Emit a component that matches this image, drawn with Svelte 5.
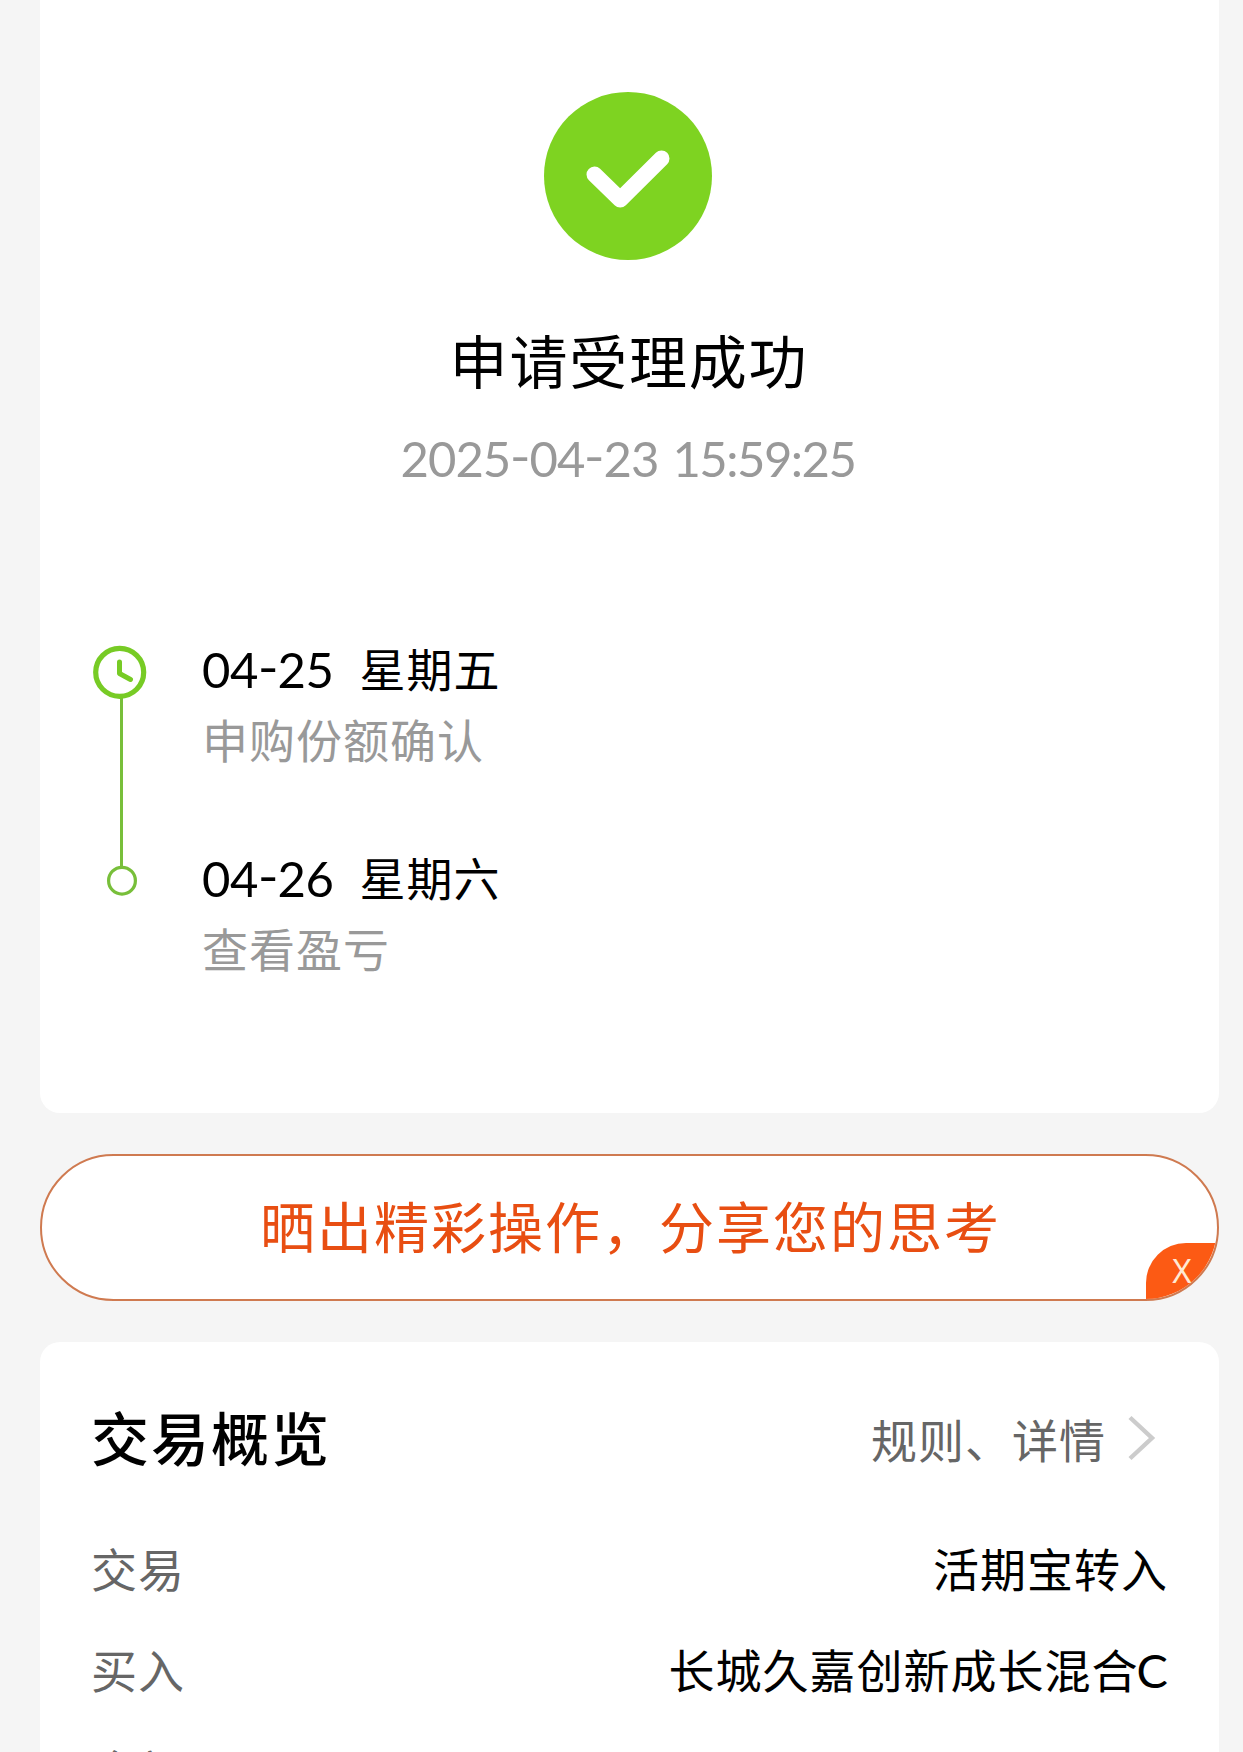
<script>
  const steps = [
    { month: '04', date: '25', day: '星期五', note: '申购份额确认' },
    { month: '04', date: '26', day: '星期六', note: '查看盈亏' }
  ];
  const rows = [
    { label: '交易', value: '活期宝转入', latin: '' },
    { label: '买入', value: '长城久嘉创新成长混合', latin: 'C' },
    { label: '金额', value: '', latin: '' }
  ];
</script>

<main>
  <section class="card result">
    <svg class="check" viewBox="0 0 168 168" aria-hidden="true">
      <circle cx="84" cy="84" r="84" fill="#7ed321" />
      <path d="M50.5 82.5 L76.2 107.5 L117.5 66.5" fill="none" stroke="#fff" stroke-width="16" stroke-linecap="round" stroke-linejoin="round" />
    </svg>
    <h1>申请受理成功</h1>
    <p class="time">
      <span>2025<i>-</i>04<i>-</i>23</span>
      <span class="clock">15:59:25</span>
    </p>

    <div class="timeline">
      <svg class="rail" viewBox="0 0 56 252" aria-hidden="true">
        <path d="M29.5 53 V222" stroke="#78bf3a" stroke-width="3" />
        <circle cx="27.7" cy="27.3" r="24" fill="none" stroke="#77cb25" stroke-width="5.2" />
        <path d="M27.5 17 V28.5 L38.5 34.5" fill="none" stroke="#77cb25" stroke-width="5" stroke-linecap="round" stroke-linejoin="round" />
        <circle cx="30" cy="235.7" r="13.4" fill="none" stroke="#78bf3a" stroke-width="3.2" />
      </svg>
      <ol>
        {#each steps as step}
          <li>
            <div class="when"><span class="date">{step.month}<i>-</i>{step.date}</span><span class="day">{step.day}</span></div>
            <div class="note">{step.note}</div>
          </li>
        {/each}
      </ol>
    </div>
  </section>

  <div class="share">
    <span>晒出精彩操作，分享您的思考</span>
    <button class="close" aria-label="关闭">X</button>
  </div>

  <section class="card overview">
    <header>
      <h2>交易概览</h2>
      <a class="rules" href="#rules">
        <span>规则、详情</span>
        <svg viewBox="0 0 28 46" aria-hidden="true">
          <path d="M2 2.5 L24 23 L2 43.5" fill="none" stroke="#ccc" stroke-width="4.4" />
        </svg>
      </a>
    </header>
    {#each rows as row}
      <div class="row">
        <span class="label">{row.label}</span>
        <span class="value">{row.value}{#if row.latin}<span class="latin">{row.latin}</span>{/if}</span>
      </div>
    {/each}
  </section>
</main>

<style>
  :global(body) {
    background: #f5f5f5;
  }
  main {
    box-sizing: border-box;
    width: 1243px;
    height: 1752px;
    padding: 0 24px 0 40px;
    overflow: hidden;
    font-family: Lato, 'Noto Sans CJK SC', sans-serif;
    color: #000;
    font-size: 46px;
    letter-spacing: 1px;
  }
  h1, h2, p, ol {
    margin: 0;
    padding: 0;
    font-weight: 400;
    list-style: none;
  }
  /* Hyphens sit at mid-height of the digits */
  i {
    display: inline-block;
    font-style: normal;
    transform: translateY(-3px) scaleX(1.15);
    margin: 0 1px;
  }
  .card {
    box-sizing: border-box;
    background: #fff;
  }
  .result {
    height: 1113px;
    padding-top: 92px;
    border-radius: 0 0 20px 20px;
    display: flex;
    flex-direction: column;
    align-items: center;
  }
  .check {
    width: 168px;
    height: 168px;
    margin-right: 3px;
  }
  h1 {
    margin-top: 62px;
    margin-right: 1px;
    font-size: 58px;
    line-height: 80px;
    letter-spacing: 1.8px;
  }
  .time {
    display: flex;
    gap: 14px;
    margin-top: 26px;
    margin-right: 3px;
    font-size: 49px;
    line-height: 60px;
    color: #999;
    letter-spacing: -1px;
  }
  .clock {
    letter-spacing: -1.5px;
  }
  .timeline {
    align-self: stretch;
    display: flex;
    margin-top: 157px;
    padding-left: 52px;
  }
  .rail {
    width: 56px;
    height: 252px;
  }
  ol {
    margin-left: 54px;
    margin-top: -6px;
  }
  li {
    height: 209px;
  }
  .when {
    display: flex;
    gap: 26px;
    height: 60px;
    line-height: 60px;
  }
  .date {
    font-size: 49px;
    line-height: 60px;
    letter-spacing: -0.5px;
  }
  .day {
    line-height: 61px;
  }
  .note {
    margin-top: 12px;
    line-height: 60px;
    color: #999;
  }
  .share {
    position: relative;
    box-sizing: border-box;
    height: 147px;
    margin: 41px 0;
    border: 2px solid #cf7a50;
    border-radius: 74px;
    background: #fff;
    overflow: hidden;
    display: flex;
    align-items: center;
    justify-content: center;
    padding: 0 0 2px 2px;
    font-size: 55px;
    line-height: 80px;
    letter-spacing: 2px;
    color: #e84e12;
  }
  .close {
    position: absolute;
    right: 0;
    bottom: 0;
    width: 71px;
    height: 56px;
    padding: 0 0 0 1px;
    border: 0;
    border-radius: 40px 0 0 0;
    background: #fc5a14;
    color: #ffe9d4;
    font: 33px/56px 'Noto Sans', sans-serif;
  }
  .overview {
    height: 500px;
    padding: 57px 51px 0 51px;
    border-radius: 20px 20px 0 0;
  }
  header {
    display: flex;
    justify-content: space-between;
    align-items: center;
    height: 80px;
    margin-bottom: 41px;
  }
  h2 {
    font-size: 58px;
    line-height: 80px;
    letter-spacing: 2px;
    font-weight: 500;
  }
  .rules {
    display: flex;
    align-items: center;
    gap: 22px;
    padding: 0 12px 2px 0;
    color: #666;
    text-decoration: none;
  }
  .rules svg {
    width: 28px;
    height: 46px;
  }
  .row {
    display: flex;
    justify-content: space-between;
    height: 101px;
    line-height: 100px;
  }
  .label {
    color: #666;
  }
  .value {
    line-height: 99px;
  }
  .latin {
    font-size: 47px;
    letter-spacing: 0;
    margin-left: -2px;
  }
</style>
